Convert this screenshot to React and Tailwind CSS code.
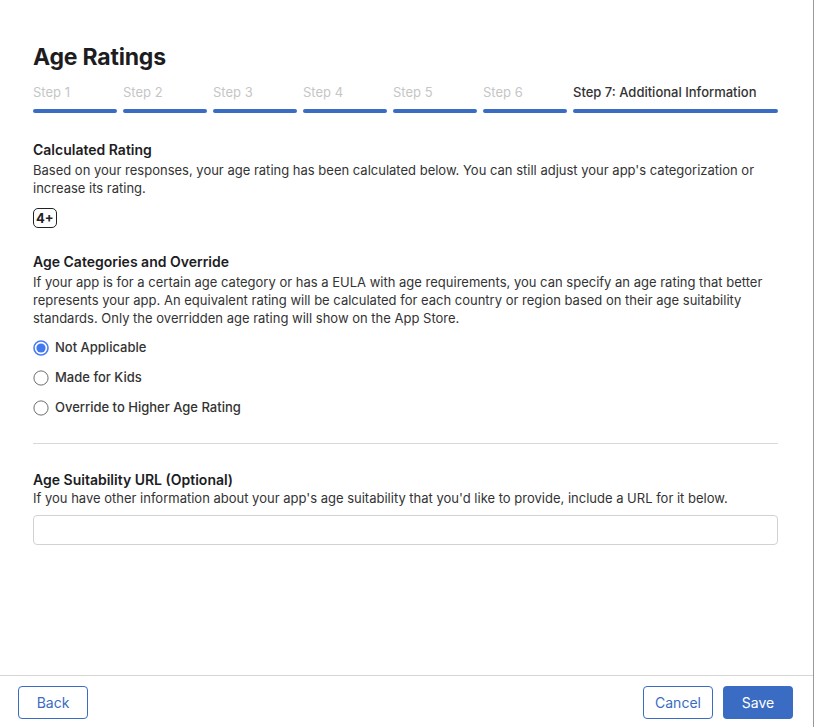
import React, { useState } from 'react';

const steps = ['Step 1', 'Step 2', 'Step 3', 'Step 4', 'Step 5', 'Step 6'];

const options = ['Not Applicable', 'Made for Kids', 'Override to Higher Age Rating'];

function Radio({ checked }) {
  if (checked) {
    return (
      <svg width="16" height="16" viewBox="0 0 16 16" className="shrink-0">
        <circle cx="8" cy="8" r="7" fill="#fff" stroke="#4a7cf0" strokeWidth="1.6" />
        <circle cx="8" cy="8" r="4.6" fill="#4278f0" />
      </svg>
    );
  }
  return (
    <svg width="16" height="16" viewBox="0 0 16 16" className="shrink-0">
      <circle cx="8" cy="8" r="7.1" fill="#fff" stroke="#6e6e6e" strokeWidth="1" />
    </svg>
  );
}

export default function App() {
  const [selected, setSelected] = useState(0);
  const [url, setUrl] = useState('');

  return (
    <div
      className="h-screen flex flex-col bg-white border-r border-[#9a9a9a] text-[#333]"
      style={{ fontFamily: 'Inter, "Helvetica Neue", Arial, sans-serif' }}
    >
      <div className="flex-1 pt-[43px] pl-[33px] pr-[35px]">
        <h1 className="text-[23px] leading-[28px] font-bold text-[#1d1d1f] tracking-[-0.2px]">Age Ratings</h1>

        {/* Steps */}
        <div className="flex gap-[6px] mt-[12px]">
          {steps.map((s) => (
            <div key={s} className="w-[84px]">
              <div className="text-[13px] leading-[18px] text-[#c6c6c6]">{s}</div>
              <div className="h-[4px] rounded-full bg-[#3a6cc3] mt-[8px]" />
            </div>
          ))}
          <div className="flex-1">
            <div className="text-[13px] leading-[18px] text-[#333] font-medium">Step 7: Additional Information</div>
            <div className="h-[4px] rounded-full bg-[#3a6cc3] mt-[8px]" />
          </div>
        </div>

        {/* Calculated Rating */}
        <h2 className="mt-[27px] text-[14px] leading-[20px] font-semibold text-[#1d1d1f]">Calculated Rating</h2>
        <p className="mt-[1px] text-[13px] leading-[18px] text-[#333]">
          Based on your responses, your age rating has been calculated below. You can still adjust your app's categorization or increase its rating.
        </p>
        <div className="mt-[11px] inline-flex items-center justify-center h-[20px] px-[2px] border-[1.5px] border-[#222] rounded-[5px] text-[13px] leading-none font-bold text-[#222]">
          4+
        </div>

        {/* Age Categories */}
        <h2 className="mt-[23px] text-[14px] leading-[20px] font-semibold text-[#1d1d1f]">Age Categories and Override</h2>
        <p className="mt-[1px] text-[13px] leading-[18px] text-[#333]">
          If your app is for a certain age category or has a EULA with age requirements, you can specify an age rating that better represents your app. An equivalent rating will be calculated for each country or region based on their age suitability standards. Only the overridden age rating will show on the App Store.
        </p>
        <div className="mt-[11px] flex flex-col gap-[10px]">
          {options.map((o, i) => (
            <label
              key={o}
              className="flex items-center gap-[6px] h-[20px] cursor-pointer"
              onClick={() => setSelected(i)}
            >
              <Radio checked={selected === i} />
              <span className="text-[13px] font-medium text-[#333]">{o}</span>
            </label>
          ))}
        </div>

        <div className="mt-[25px] border-t border-[#d8d8d8]" />

        {/* Age Suitability URL */}
        <h2 className="mt-[26px] text-[14px] leading-[20px] font-semibold text-[#1d1d1f]">Age Suitability URL (Optional)</h2>
        <p className="mt-[-1px] text-[13px] leading-[18px] text-[#333]">
          If you have other information about your app's age suitability that you'd like to provide, include a URL for it below.
        </p>
        <input
          value={url}
          onChange={(e) => setUrl(e.target.value)}
          className="mt-[8px] w-full h-[30px] border border-[#d2d2d2] rounded-[4px] px-2 text-[13px] outline-none"
        />
      </div>

      {/* Footer */}
      <div className="h-[52px] border-t border-[#d6d6d6] pt-[10px] pl-[18px] pr-[20px] flex items-start justify-between">
        <button className="w-[70px] h-[33px] border border-[#3a6cc3] rounded-[4px] text-[14px] text-[#3a6cc3] bg-white">
          Back
        </button>
        <div className="flex gap-[10px]">
          <button className="w-[70px] h-[33px] border border-[#3a6cc3] rounded-[4px] text-[14px] text-[#3a6cc3] bg-white">
            Cancel
          </button>
          <button className="w-[70px] h-[33px] rounded-[4px] text-[14px] text-white bg-[#3a6cc3]">
            Save
          </button>
        </div>
      </div>
    </div>
  );
}
